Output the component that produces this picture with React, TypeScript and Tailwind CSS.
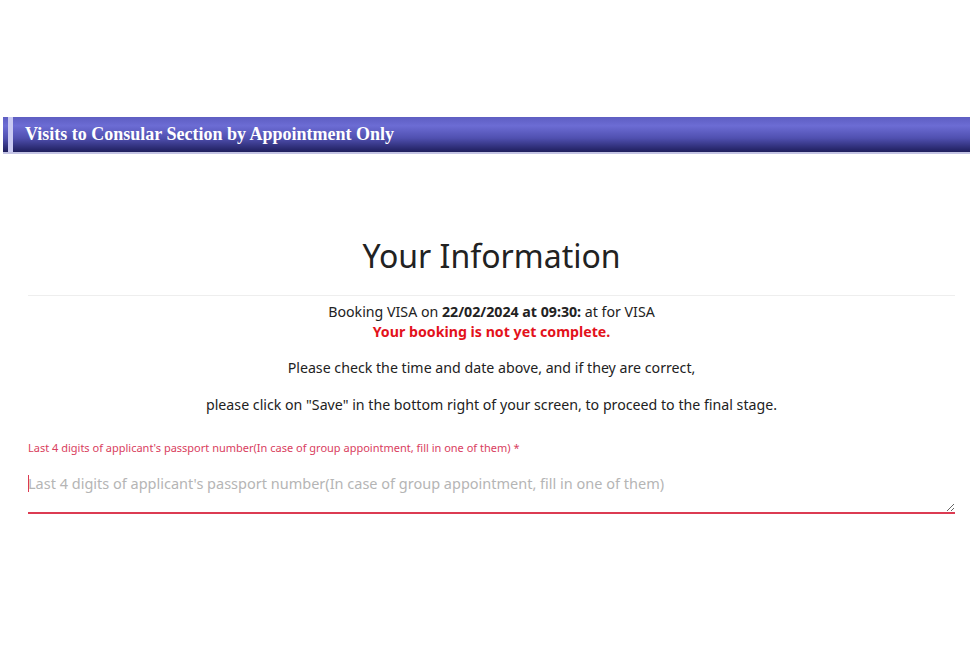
export default function App() {
  return (
    <div className="min-h-[670px] w-[970px] bg-white font-['Noto_Sans',sans-serif]">
      <div className="h-[117px]" />
      {/* Header bar */}
      <div className="ml-[3px] flex h-[37px] items-stretch border-b-2 border-[#c4c4e4] bg-[linear-gradient(to_bottom,#5e5ec2_0%,#6c6cd4_25%,#5050b0_60%,#1e1e5c_100%)]">
        <div className="ml-[5px] w-[5px] bg-[#c9c9f2]" />
        <h1 className="ml-[12px] flex items-center font-['Liberation_Serif',serif] text-[18px] font-bold text-white">
          Visits to Consular Section by Appointment Only
        </h1>
      </div>

      <div className="pl-[28px] pr-[15px]">
        <h2 className="mt-[82px] text-center text-[32px] leading-[40px] font-normal text-[#222]">
          Your Information
        </h2>
        <div className="mt-[19px] border-t border-[#eeeeee]" />

        <div className="mt-[6px] text-center text-[14.2px] leading-[20px] text-[#222]">
          <p>
            Booking VISA on <b>22/02/2024 at 09:30:</b> at for VISA
          </p>
          <p className="font-bold text-[#e3121b]">Your booking is not yet complete.</p>
          <p className="mt-[16px]">Please check the time and date above, and if they are correct,</p>
          <p className="mt-[17px]">
            please click on "Save" in the bottom right of your screen, to proceed to the final stage.
          </p>
        </div>

        <label className="mt-[25px] block text-[11px] leading-[16px] text-[#d9405e]">
          Last 4 digits of applicant's passport number(In case of group appointment, fill in one of them) *
        </label>
        <div className="relative pt-[10px]">
          <span className="absolute left-0 top-[19px] h-[17px] w-px bg-[#dc3b52]" />
          <textarea
            rows={1}
            className="block h-[48px] w-full resize-y border-b-2 border-[#dc3b52] pt-[6px] text-[14.5px] leading-[22px] text-[#333] caret-[#dc3b52] outline-none placeholder:text-[#b5b5b5]"
            placeholder="Last 4 digits of applicant's passport number(In case of group appointment, fill in one of them)"
          />
        </div>
      </div>
    </div>
  );
}
